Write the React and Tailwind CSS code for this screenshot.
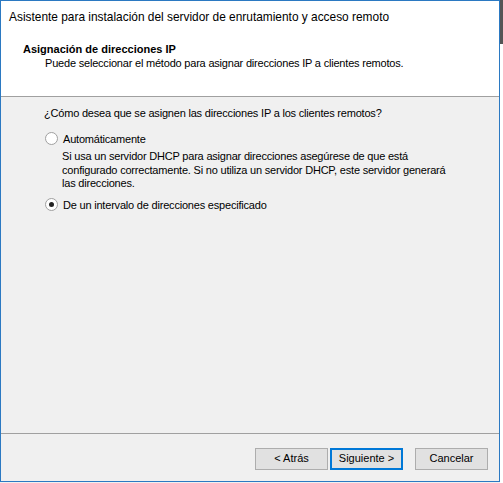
import React from 'react';

const ui = { fontFamily: '"Liberation Sans", Arial, sans-serif' };

const Radio = ({ checked }) => (
  <span className="relative inline-block w-[13px] h-[13px] rounded-full border border-[#a0a0a0] bg-white">
    {checked && <span className="absolute left-[3px] top-[3px] w-[5px] h-[5px] rounded-full bg-[#222]" />}
  </span>
);

const Btn = ({ label, primary }) => (
  <button
    className={`w-[73px] h-[22px] text-[11px] text-black bg-[#e1e1e1] border ${primary ? 'border-[#0078d7] border-2' : 'border-[#adadad]'}`}
    style={ui}
  >
    {label}
  </button>
);

export default function App() {
  return (
    <div className="flex w-[503px] h-[483px] bg-[#f0f0f0]">
      <div className="flex flex-col w-[500px] h-[482px] border border-[#2b79c2] bg-[#f0f0f0]">
        {/* header */}
        <div className="h-[96px] bg-white border-b border-[#a0a0a0]">
          <div className="pl-[8px] pt-[8px] text-[11.9px] text-black" style={ui}>
            Asistente para instalación del servidor de enrutamiento y acceso remoto
          </div>
          <div className="pl-[22px] pt-[15px] text-[11px] leading-[14px] font-bold text-black" style={ui}>
            Asignación de direcciones IP
          </div>
          <div className="pl-[44px] text-[11px] leading-[14px] tracking-[-0.2px] text-black" style={ui}>
            Puede seleccionar el método para asignar direcciones IP a clientes remotos.
          </div>
        </div>

        {/* body */}
        <div className="flex-1 text-[11px] tracking-[-0.2px] text-black" style={ui}>
          <div className="pl-[43px] pt-[8px]">¿Cómo desea que se asignen las direcciones IP a los clientes remotos?</div>
          <div className="flex items-center gap-[5px] pl-[44px] pt-[9px]">
            <Radio />
            <span>Automáticamente</span>
          </div>
          <div className="pl-[61px] pt-[3px] w-[460px] leading-[13.5px]">
            Si usa un servidor DHCP para asignar direcciones asegúrese de que está configurado correctamente. Si no utiliza un servidor DHCP, este servidor generará las direcciones.
          </div>
          <div className="flex items-center gap-[5px] pl-[44px] pt-[6px]">
            <Radio checked />
            <span>De un intervalo de direcciones especificado</span>
          </div>
        </div>

        {/* footer */}
        <div className="h-[48px] border-t border-[#a0a0a0] flex items-center justify-end pr-[11px] pt-[2px]">
          <Btn label="< Atrás" />
          <div className="w-[2px]" />
          <Btn label="Siguiente >" primary />
          <div className="w-[12px]" />
          <Btn label="Cancelar" />
        </div>
      </div>
      <div className="flex flex-col w-[3px]">
        <div className="h-[44px] bg-[#555]" />
        <div className="flex-1 bg-white" />
      </div>
    </div>
  );
}
